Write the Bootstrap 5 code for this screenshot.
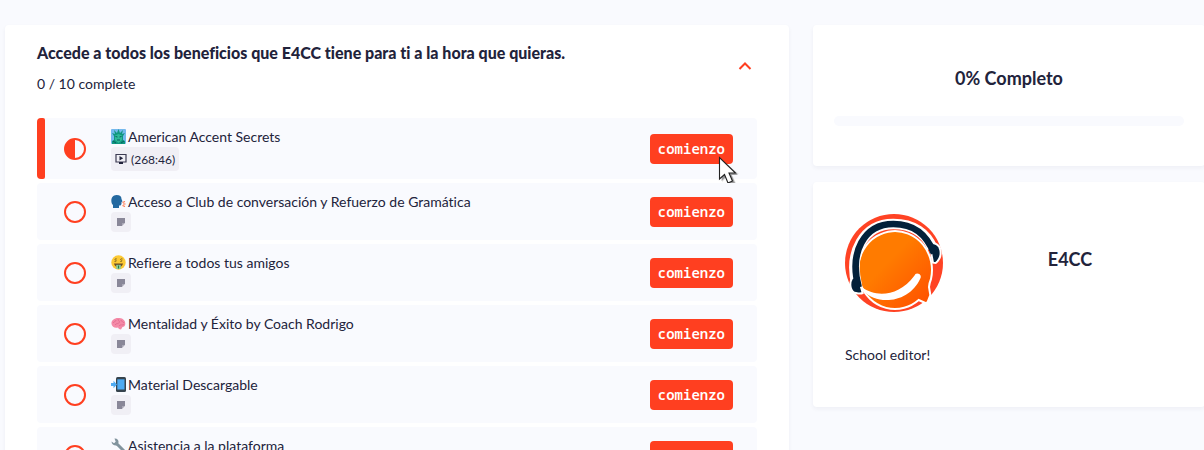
<!DOCTYPE html>
<html lang="es">
<head>
<meta charset="utf-8">
<meta name="viewport" content="width=device-width, initial-scale=1">
<title>E4CC</title>
<link href="https://cdn.jsdelivr.net/npm/bootstrap@5.3.0/dist/css/bootstrap.min.css" rel="stylesheet">
<style>
:root { --brand: #ff3f20; --ink: #22233b; --page: #f9fafe; }
html { scrollbar-width: none; }
body { background: var(--page); color: var(--ink); font-family: Lato, sans-serif; font-size: 14px; line-height: 21px; font-variant-ligatures: none; overflow-x: hidden; }
.layout { display: grid; grid-template-columns: minmax(0, 2fr) minmax(0, 1fr); gap: 24px; margin-right: -1px; padding: 25px 0 24px 5px; }
.panel { background: #fff; border-radius: 4px; box-shadow: 0 2px 4px rgba(30, 30, 70, .05); }
.course { padding: 16px 32px 32px; }
.course-title { font-size: 16px; font-weight: 900; line-height: 24px; margin-bottom: 8px; }
.course-head { margin-bottom: 24px; }
.toggle { width: 24px; height: 24px; margin-bottom: 4px; }
.lessons { gap: 4px; }
.lesson { position: relative; background: var(--page); border-radius: 4px; padding: 8px 24px 8px 27px; }
.lesson.current::before { content: ""; position: absolute; inset: 0 auto 0 0; width: 8px; background: var(--brand); border-radius: 4px 2px 2px 4px; }
.state { width: 22px; height: 22px; margin-right: 25px; border: 2px solid var(--brand); border-radius: 50%; }
.state.half { background: linear-gradient(90deg, var(--brand) 50%, transparent 50%); }
.emoji { width: 15px; height: 15px; margin-right: 2px; }
.chip { display: flex; align-items: center; justify-content: center; width: 20px; height: 20px; background: #f0eff5; border-radius: 4px; font-size: 12px; }
.chip.timed { width: fit-content; height: 24px; padding: 0 4px; gap: 4px; }
.start { height: 30px; padding: 0 8px; border-radius: 4px; background: var(--brand); color: #fff; border: 0; font: 600 14px/30px "Noto Sans Mono", "DejaVu Sans Mono", monospace; }
.start:hover { background: #e5381c; color: #fff; }
.pointer { position: absolute; left: 68px; top: 21px; width: 22px; height: 34px; pointer-events: none; }
.side { gap: 16px; }
.side-title { font-size: 18px; font-weight: 700; line-height: 26px; }
.status { padding: 40px 21px; }
.status .progress { height: 10px; margin-top: 25px; border-radius: 5px; background: var(--page); }
.author { padding: 32px; }
.author-row { gap: 24px; margin-bottom: 32px; }
.logo { width: 98px; height: 98px; }
.author-text { margin-bottom: 10px; }
</style>
</head>
<body>
<main class="layout align-items-start">
  <section class="panel course">
    <header class="course-head d-flex align-items-center justify-content-between">
      <div>
        <h1 class="course-title">Accede a todos los beneficios que E4CC tiene para ti a la hora que quieras.</h1>
        <p class="mb-0">0 / 10 complete</p>
      </div>
      <button type="button" class="toggle btn p-0 border-0 d-flex" aria-label="Contraer">
        <svg width="24" height="24" viewBox="0 0 24 24" fill="none" stroke="#ff3f20" stroke-width="2"><path d="M6.500 15 12 9.500l5.500 5.500"/></svg>
      </button>
    </header>
    <ul class="lessons list-unstyled d-flex flex-column mb-0">
      <li class="lesson current d-flex align-items-center">
        <span class="state half flex-shrink-0"></span>
        <div class="flex-grow-1">
          <div class="d-flex align-items-center">
            <svg class="emoji" viewBox="0 0 15 15"><rect width="15" height="15" rx="1" fill="#75b9ee"/><path d="M1 15v-3l2-1V7L1 4l3 1-1-4 3 3 1.500-4L9 4l3-3-1 4 3-1-2 3v4l2 1v3z" fill="#10977f"/><path d="M4 6.500 7.500 5 11 6.500V11l-3.500 3L4 11z" fill="#2eb998"/><path d="M4.500 7.500l2 .5m4-.5-2 .5M6 11h3M2 12l3 2m8-2-3 2" stroke="#075f60" fill="none"/></svg>
            <span>American Accent Secrets</span>
          </div>
          <span class="chip timed">
            <svg width="12" height="12" viewBox="0 0 12 12"><path d="M1 1.500h10v7.500H1z" fill="none" stroke="#3c3b52" stroke-width="1.200"/><path d="M4.500 3v4.500l3.700-2.250zM4 9h4v2H4z" fill="#22233b"/></svg>
            <span>(268:46)</span>
          </span>
        </div>
        <div class="position-relative">
          <button type="button" class="start btn d-block">comienzo</button>
          <svg class="pointer" viewBox="0 0 22 34"><path d="M3 4v22l5-5 4 8 5-2-4-8 7-1z" fill="#000" opacity=".12" transform="translate(1 1)"/><path d="M1.500 2.500v21.500l5-4.500 4 8.500 4.500-2-3.500-8h6.500z" transform="translate(2 2)" fill="#000" opacity=".3"/><path d="M1.500 2.500v21.500l5-4.500 3.500 8.500 4.500-2-3.500-8h6.500z" fill="#fff" stroke="#222" stroke-width="1.100"/></svg>
        </div>
      </li>
      <li class="lesson d-flex align-items-center">
        <span class="state flex-shrink-0"></span>
        <div class="flex-grow-1">
          <div class="d-flex align-items-center">
            <svg class="emoji" viewBox="0 0 15 15"><path d="M5.500 1C9 1 10.500 2.500 10.500 5l1 2.500-1 .5v2l-1 1.500H8V14H2v-3C-1 8 0 1 5.500 1z" fill="#2469a0"/><path d="m11.500 8.500 2.500-1M12 10h2.500M11.500 11.500l2.500 1" stroke="#ff7043" stroke-width="1.100"/></svg>
            <span>Acceso a Club de conversación y Refuerzo de Gramática</span>
          </div>
          <span class="chip"><svg width="8" height="8" viewBox="0 0 8 8"><path d="M0 0h8v5H5v3H0z" fill="#898798"/><path d="M5 8V5h3z" fill="#a9a7b5"/></svg></span>
        </div>
        <button type="button" class="start btn">comienzo</button>
      </li>
      <li class="lesson d-flex align-items-center">
        <span class="state flex-shrink-0"></span>
        <div class="flex-grow-1">
          <div class="d-flex align-items-center">
            <svg class="emoji" viewBox="0 0 15 15"><circle cx="7.500" cy="7.500" r="7.200" fill="#fcc934"/><path d="M3 8.500h9c-.5 2.500-2.200 3.500-4.500 3.500S3.500 11 3 8.500z" fill="#6a4a25"/><path d="M5.200 9.800h4.600v4.200H5.200z" fill="#8cc995"/><path d="M7.500 10.500v3" stroke="#287a46"/><path d="M5.800 4C4 3.200 3.200 4.800 4.600 5.200S5.200 7 3.500 6.400M11.500 4C9.700 3.200 8.900 4.800 10.300 5.200S10.900 7 9.200 6.400" stroke="#7d6420" stroke-width=".9" fill="none"/></svg>
            <span>Refiere a todos tus amigos</span>
          </div>
          <span class="chip"><svg width="8" height="8" viewBox="0 0 8 8"><path d="M0 0h8v5H5v3H0z" fill="#898798"/><path d="M5 8V5h3z" fill="#a9a7b5"/></svg></span>
        </div>
        <button type="button" class="start btn">comienzo</button>
      </li>
      <li class="lesson d-flex align-items-center">
        <span class="state flex-shrink-0"></span>
        <div class="flex-grow-1">
          <div class="d-flex align-items-center">
            <svg class="emoji" viewBox="0 0 15 15"><path d="M.5 8C0 4 4 1.500 8 2c4-.3 6.500 3 6.300 6-.2 2-1.300 3-2.800 3l-1.500 2.500-2-.5-1-1.500C4 12.500 1 11 .5 8z" fill="#f48aa7"/><path d="M2 7c1-2 3-1 3-3m2-1c0 2 2 2 1.500 3.500M4 9c1-2 4-1 4-2.500M10 4c0 2 2 1 3 3M8 10c1-2 4-.5 5-1.500" fill="none" stroke="#e0698e" stroke-width=".8"/></svg>
            <span>Mentalidad y Éxito by Coach Rodrigo</span>
          </div>
          <span class="chip"><svg width="8" height="8" viewBox="0 0 8 8"><path d="M0 0h8v5H5v3H0z" fill="#898798"/><path d="M5 8V5h3z" fill="#a9a7b5"/></svg></span>
        </div>
        <button type="button" class="start btn">comienzo</button>
      </li>
      <li class="lesson d-flex align-items-center">
        <span class="state flex-shrink-0"></span>
        <div class="flex-grow-1">
          <div class="d-flex align-items-center">
            <svg class="emoji" viewBox="0 0 15 15"><rect x="5" width="10" height="15" rx="1.500" fill="#36434d"/><path d="M6.300 2.300h7.200v10.200H6.300z" fill="#4eaaf2"/><path d="M0 6h2.500V3.800L6 7.500l-3.500 3.700V9H0z" fill="#4eaaf2"/></svg>
            <span>Material Descargable</span>
          </div>
          <span class="chip"><svg width="8" height="8" viewBox="0 0 8 8"><path d="M0 0h8v5H5v3H0z" fill="#898798"/><path d="M5 8V5h3z" fill="#a9a7b5"/></svg></span>
        </div>
        <button type="button" class="start btn">comienzo</button>
      </li>
      <li class="lesson d-flex align-items-center">
        <span class="state flex-shrink-0"></span>
        <div class="flex-grow-1">
          <div class="d-flex align-items-center">
            <svg class="emoji" viewBox="0 0 15 15"><path d="M5.500 5.500 13 13" stroke="#82949e" stroke-width="3" stroke-linecap="round"/><path d="M3.500.5C6 .2 8 2 7.500 4.500L6 7.500C3.500 8 .5 6.500.5 3.500L3 5.200l1.700-1.500z" fill="#82949e"/></svg>
            <span>Asistencia a la plataforma</span>
          </div>
          <span class="chip"><svg width="8" height="8" viewBox="0 0 8 8"><path d="M0 0h8v5H5v3H0z" fill="#898798"/><path d="M5 8V5h3z" fill="#a9a7b5"/></svg></span>
        </div>
        <button type="button" class="start btn">comienzo</button>
      </li>
    </ul>
  </section>
  <aside class="side d-flex flex-column">
    <section class="panel status">
      <h2 class="side-title text-center mb-0">0% Completo</h2>
      <div class="progress" role="progressbar" aria-label="Progreso" aria-valuenow="0" aria-valuemin="0" aria-valuemax="100"><div class="progress-bar" style="width: 0%"></div></div>
    </section>
    <section class="panel author">
      <div class="author-row d-flex align-items-center">
        <svg class="logo flex-shrink-0" viewBox="45 42 294 294" role="img" aria-label="E4CC">
          <defs><linearGradient id="face" x1="0" y1="0" x2="1" y2="1"><stop offset=".4" stop-color="#ff7b00"/><stop offset="1" stop-color="#ff4d00"/></linearGradient></defs>
          <circle cx="192" cy="189" r="147" fill="#ff4324"/>
          <path d="M303 237A111 117 0 1 0 266 300l20 9q6 1 8-6l7-18-4-24q1-12 6-24z" fill="url(#face)" stroke="#fff" stroke-width="6"/>
          <path d="M80 255C56 158 101 72 190 72c61 0 99 29 117 72" fill="none" stroke="#fff" stroke-width="32"/>
          <path d="M66 235c-10 18-4 42 12 44 8 2 16 2 20 0l-15-54zM298 132c17-6 31 3 33 18 3 15-3 30-14 39l-8-1z" fill="#03213a" stroke="#fff" stroke-width="6"/>
          <path d="M86 262C57 158 102 72 190 72c61 0 99 29 122 88" fill="none" stroke="#03213a" stroke-width="20"/>
          <path d="M96 262c42 31 110 28 157-35a10 10 0 0 1 19 6c-34 79-134 83-170 40z" fill="#fff"/>
        </svg>
        <h2 class="side-title flex-grow-1 text-center mb-2">E4CC</h2>
      </div>
      <p class="author-text">School editor!</p>
    </section>
  </aside>
</main>
<script src="https://cdn.jsdelivr.net/npm/bootstrap@5.3.0/dist/js/bootstrap.bundle.min.js"></script>
</body>
</html>
